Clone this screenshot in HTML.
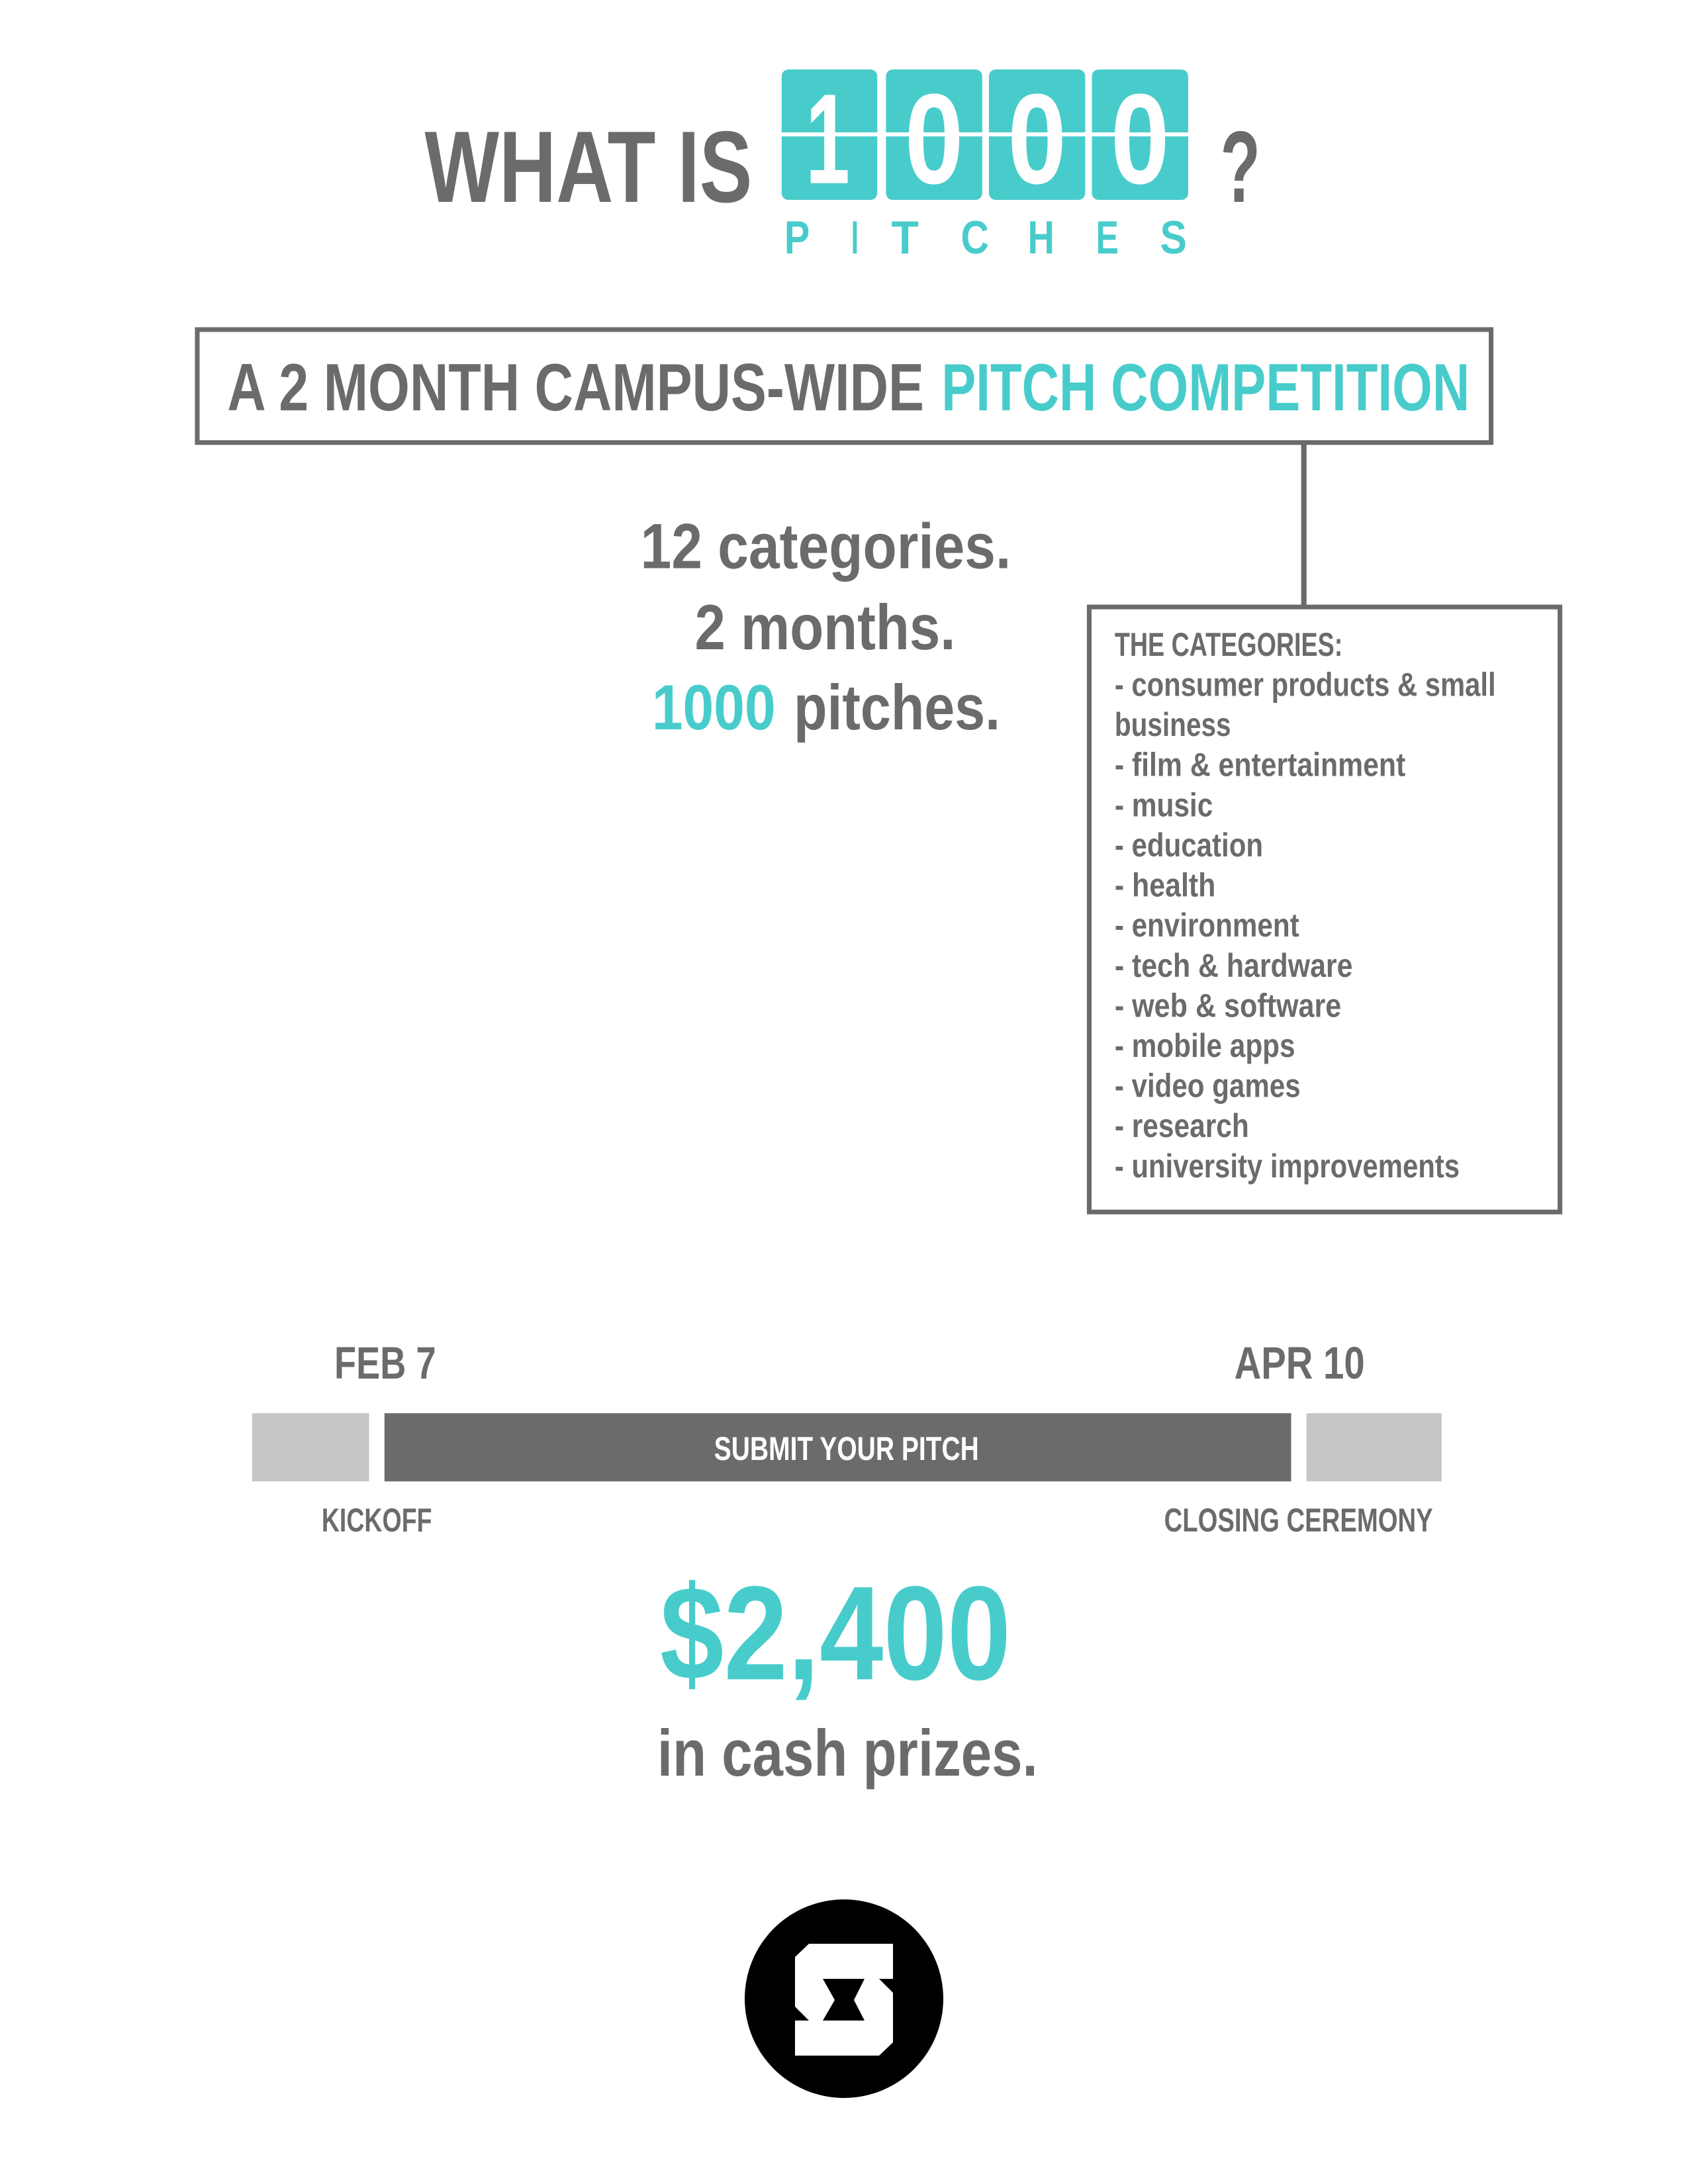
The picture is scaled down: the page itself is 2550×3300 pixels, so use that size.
<!DOCTYPE html>
<html><head><meta charset="utf-8"><style>
html,body{margin:0;padding:0;background:#fff;}
svg{display:block;}
text{font-family:"Liberation Sans",sans-serif;font-weight:bold;}
</style></head><body>
<svg width="2550" height="3300" viewBox="0 0 2550 3300" xmlns="http://www.w3.org/2000/svg">
<rect width="2550" height="3300" fill="#fff"/>
<g transform="scale(1.0101)">
<g fill="#6b6b6b">
<text x="635" y="302" font-size="152" textLength="490" lengthAdjust="spacingAndGlyphs">WHAT IS</text>
<text x="1825" y="302" font-size="152" textLength="60" lengthAdjust="spacingAndGlyphs">?</text>
</g>
<g fill="#48cccb">
<rect x="1169" y="104" width="143" height="195" rx="10"/>
<rect x="1325" y="104" width="144" height="195" rx="10"/>
<rect x="1479" y="104" width="144" height="195" rx="10"/>
<rect x="1633" y="104" width="144" height="195" rx="10"/>
</g>
<g fill="#fff">
<text x="1205" y="274" font-size="192" textLength="66" lengthAdjust="spacingAndGlyphs">1</text>
<text x="1353" y="274" font-size="192" textLength="88" lengthAdjust="spacingAndGlyphs">0</text>
<text x="1507" y="274" font-size="192" textLength="88" lengthAdjust="spacingAndGlyphs">0</text>
<text x="1661" y="274" font-size="192" textLength="88" lengthAdjust="spacingAndGlyphs">0</text>
<rect x="1160" y="198" width="625" height="6"/>
</g>
<g fill="#48cccb" font-size="70">
<text x="1173" y="379" textLength="38" lengthAdjust="spacingAndGlyphs">P</text>
<text x="1273" y="379" textLength="11" lengthAdjust="spacingAndGlyphs">I</text>
<text x="1333" y="379" textLength="41" lengthAdjust="spacingAndGlyphs">T</text>
<text x="1437" y="379" textLength="42" lengthAdjust="spacingAndGlyphs">C</text>
<text x="1537" y="379" textLength="40" lengthAdjust="spacingAndGlyphs">H</text>
<text x="1639" y="379" textLength="34" lengthAdjust="spacingAndGlyphs">E</text>
<text x="1735" y="379" textLength="40" lengthAdjust="spacingAndGlyphs">S</text>
</g>
<rect x="295" y="493" width="1935" height="169" fill="none" stroke="#6b6b6b" stroke-width="7"/>
<text x="340" y="614" font-size="100" fill="#6b6b6b" textLength="1042" lengthAdjust="spacingAndGlyphs">A 2 MONTH CAMPUS-WIDE</text>
<text x="1408" y="614" font-size="100" fill="#48cccb" textLength="790" lengthAdjust="spacingAndGlyphs">PITCH COMPETITION</text>
<rect x="1946" y="665" width="8" height="240" fill="#6b6b6b"/>
<g font-size="96" fill="#6b6b6b">
<text x="958" y="850" textLength="554" lengthAdjust="spacingAndGlyphs">12 categories.</text>
<text x="1039" y="971" textLength="390" lengthAdjust="spacingAndGlyphs">2 months.</text>
<text x="975" y="1091" fill="#48cccb" textLength="185" lengthAdjust="spacingAndGlyphs">1000</text>
<text x="1187" y="1091" textLength="309" lengthAdjust="spacingAndGlyphs">pitches.</text>
</g>
<rect x="1629" y="908" width="704" height="905" fill="none" stroke="#6b6b6b" stroke-width="7"/>
<g font-size="50" fill="#6b6b6b">
<text x="1667" y="981" textLength="341" lengthAdjust="spacingAndGlyphs">THE CATEGORIES:</text>
<text x="1667" y="1041" textLength="570" lengthAdjust="spacingAndGlyphs">- consumer products &amp; small</text>
<text x="1667" y="1101" textLength="174" lengthAdjust="spacingAndGlyphs">business</text>
<text x="1667" y="1161" textLength="435" lengthAdjust="spacingAndGlyphs">- film &amp; entertainment</text>
<text x="1667" y="1221" textLength="147" lengthAdjust="spacingAndGlyphs">- music</text>
<text x="1667" y="1281" textLength="222" lengthAdjust="spacingAndGlyphs">- education</text>
<text x="1667" y="1341" textLength="151" lengthAdjust="spacingAndGlyphs">- health</text>
<text x="1667" y="1401" textLength="276" lengthAdjust="spacingAndGlyphs">- environment</text>
<text x="1667" y="1461" textLength="356" lengthAdjust="spacingAndGlyphs">- tech &amp; hardware</text>
<text x="1667" y="1521" textLength="339" lengthAdjust="spacingAndGlyphs">- web &amp; software</text>
<text x="1667" y="1581" textLength="270" lengthAdjust="spacingAndGlyphs">- mobile apps</text>
<text x="1667" y="1641" textLength="278" lengthAdjust="spacingAndGlyphs">- video games</text>
<text x="1667" y="1701" textLength="201" lengthAdjust="spacingAndGlyphs">- research</text>
<text x="1667" y="1761" textLength="516" lengthAdjust="spacingAndGlyphs">- university improvements</text>
</g>
<g fill="#6b6b6b" font-size="68">
<text x="500" y="2062" textLength="152" lengthAdjust="spacingAndGlyphs">FEB 7</text>
<text x="1846" y="2062" textLength="195" lengthAdjust="spacingAndGlyphs">APR 10</text>
</g>
<rect x="377" y="2114" width="175" height="102" fill="#c6c6c6"/>
<rect x="575" y="2114" width="1356" height="102" fill="#6b6b6b"/>
<rect x="1954" y="2114" width="202" height="102" fill="#c6c6c6"/>
<text x="1068" y="2184" font-size="50" fill="#fff" textLength="396" lengthAdjust="spacingAndGlyphs">SUBMIT YOUR PITCH</text>
<g fill="#6b6b6b" font-size="50">
<text x="481" y="2291" textLength="165" lengthAdjust="spacingAndGlyphs">KICKOFF</text>
<text x="1741" y="2291" textLength="402" lengthAdjust="spacingAndGlyphs">CLOSING CEREMONY</text>
</g>
<text x="987" y="2512" font-size="200" fill="#48cccb" textLength="525" lengthAdjust="spacingAndGlyphs">$2,400</text>
<text x="983" y="2656" font-size="98" fill="#6b6b6b" textLength="569" lengthAdjust="spacingAndGlyphs">in cash prizes.</text>
</g>
<circle cx="1275" cy="3020" r="150" fill="#000"/>
<polygon fill="#fff" points="1222,2937 1349,2937 1349,2990 1328,2990 1349,3011 1349,3086 1328,3106 1201,3106 1201,3053 1222,3053 1201,3032 1201,2957"/>
<polygon fill="#000" points="1243,2990 1306,2990 1290,3022 1306,3053 1243,3053 1261,3022"/>
</svg>
</body></html>
